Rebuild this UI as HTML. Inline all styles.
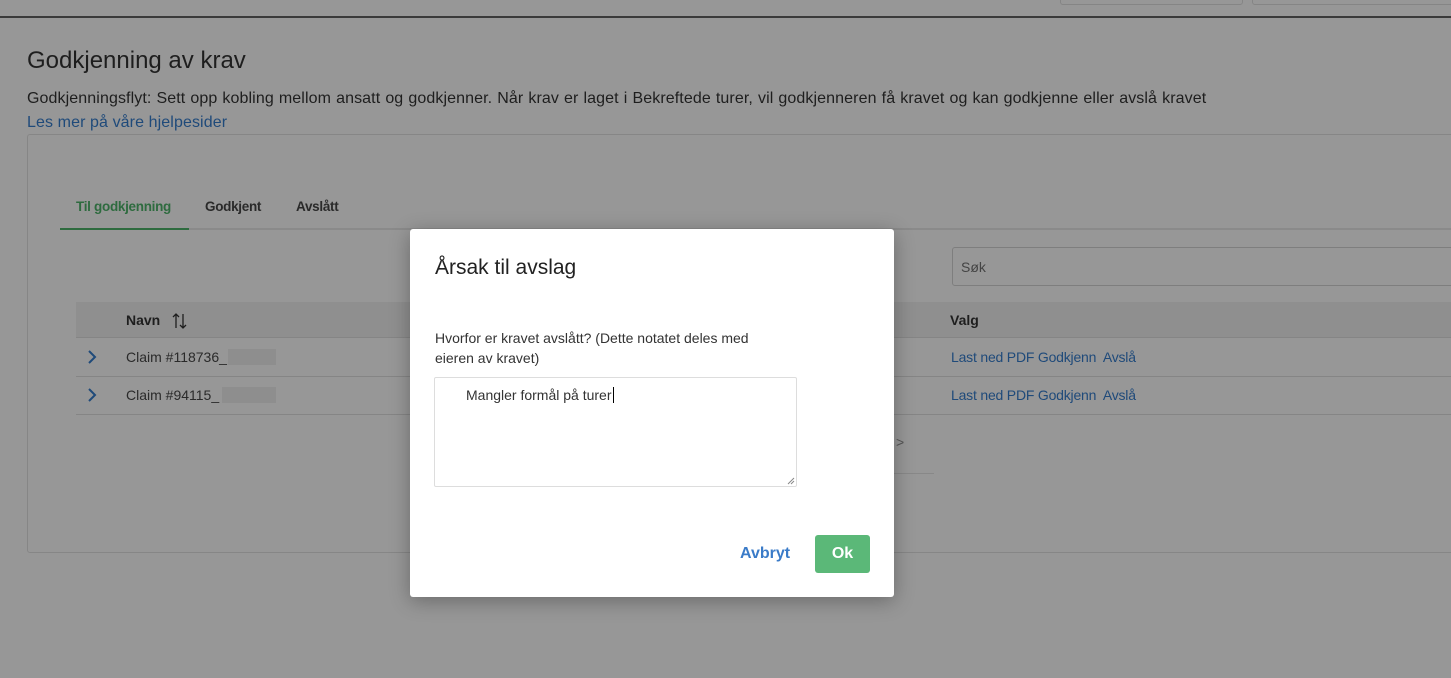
<!DOCTYPE html>
<html><head><meta charset="utf-8"><style>
*{box-sizing:border-box}
body{margin:0;width:1451px;height:678px;overflow:hidden;background:#979797;font-family:"Liberation Sans",sans-serif;position:relative;color:#222}
.a{position:absolute}
.link{color:#1f4a7a}
</style></head><body>
<div class="a" style="left:0;top:16px;width:1451px;height:2px;background:#3a3a3a"></div>
<div class="a" style="left:1060px;top:-4px;width:183px;height:9px;border:1px solid #858585;border-radius:3px"></div>
<div class="a" style="left:1252px;top:-4px;width:210px;height:9px;border:1px solid #858585;border-radius:3px"></div>
<div class="a" style="left:27px;top:47px;font-size:24px;color:#1e1e1e">Godkjenning av krav</div>
<div class="a" style="left:27px;top:90px;font-size:16px;color:#1e1e1e;letter-spacing:0.1px;word-spacing:0.5px">Godkjenningsflyt: Sett opp kobling mellom ansatt og godkjenner. Når krav er laget i Bekreftede turer, vil godkjenneren få kravet og kan godkjenne eller avslå kravet</div>
<div class="a link" style="left:27px;top:114px;font-size:16px;letter-spacing:0.1px">Les mer på våre hjelpesider</div>
<div class="a" style="left:27px;top:134px;width:1440px;height:419px;border:1px solid #868686;border-radius:3px"></div>
<div class="a" style="left:76px;top:199px;font-size:13.5px;color:#2e6b3f;font-weight:bold;letter-spacing:-0.3px">Til godkjenning</div>
<div class="a" style="left:205px;top:199px;font-size:13.5px;color:#2a2a2a;font-weight:bold;letter-spacing:-0.3px">Godkjent</div>
<div class="a" style="left:296px;top:199px;font-size:13.5px;color:#2a2a2a;font-weight:bold;letter-spacing:-0.3px">Avslått</div>
<div class="a" style="left:60px;top:228px;width:1400px;height:2px;background:#8a8a8a"></div>
<div class="a" style="left:60px;top:228px;width:129px;height:2px;background:#2e6b3f"></div>
<div class="a" style="left:952px;top:247px;width:520px;height:39px;border:1px solid #7e7e7e;border-radius:3px"></div>
<div class="a" style="left:961px;top:259px;font-size:14px;color:#444">Søk</div>
<div class="a" style="left:76px;top:302px;width:1390px;height:36px;background:#8f8f8f;border-bottom:1px solid #858585"></div>
<div class="a" style="left:126px;top:312px;font-size:14px;font-weight:bold;color:#1e1e1e">Navn</div>
<svg class="a" style="left:171px;top:312px" width="18" height="18" viewBox="0 0 18 18" fill="none" stroke="#1e1e1e" stroke-width="1.3"><path d="M5 16V2M2 5l3-3 3 3M12 2v14M9 13l3 3 3-3"/></svg>
<div class="a" style="left:950px;top:312px;font-size:14px;font-weight:bold;color:#1e1e1e">Valg</div>
<div class="a" style="left:76px;top:376px;width:1390px;height:1px;background:#858585"></div>
<div class="a" style="left:76px;top:414px;width:1390px;height:1px;background:#858585"></div>
<svg class="a" style="left:86px;top:349px" width="12" height="16" viewBox="0 0 12 16" fill="none" stroke="#1f4a7a" stroke-width="2"><path d="M3 2l6 6-6 6"/></svg>
<svg class="a" style="left:86px;top:387px" width="12" height="16" viewBox="0 0 12 16" fill="none" stroke="#1f4a7a" stroke-width="2"><path d="M3 2l6 6-6 6"/></svg>
<div class="a" style="left:126px;top:349px;font-size:14px;color:#2a2a2a">Claim #118736_</div>
<div class="a" style="left:228px;top:349px;width:48px;height:16px;background:#8e8e8e"></div>
<div class="a" style="left:126px;top:387px;font-size:14px;color:#2a2a2a">Claim #94115_</div>
<div class="a" style="left:222px;top:387px;width:54px;height:16px;background:#8e8e8e"></div>
<div class="a link" style="left:951px;top:349px;font-size:14px;letter-spacing:-0.2px">Last ned PDF&nbsp;Godkjenn&nbsp; Avslå</div>
<div class="a link" style="left:951px;top:387px;font-size:14px;letter-spacing:-0.2px">Last ned PDF&nbsp;Godkjenn&nbsp; Avslå</div>
<div class="a" style="left:896px;top:434px;font-size:14px;color:#555">&gt;</div>
<div class="a" style="left:894px;top:473px;width:40px;height:1px;background:#888"></div>
<div class="a" style="left:410px;top:229px;width:484px;height:368px;background:#fff;border-radius:3px;box-shadow:0 4px 20px rgba(0,0,0,.3)">
 <div class="a" style="left:25px;top:27px;font-size:21px;color:#222">Årsak til avslag</div>
 <div class="a" style="left:25px;top:99px;width:345px;font-size:14px;line-height:20px;color:#333">Hvorfor er kravet avslått? (Dette notatet deles med eieren av kravet)</div>
 <div class="a" style="left:24px;top:148px;width:363px;height:110px;border:1px solid #ddd;border-radius:2px">
  <div class="a" style="left:31px;top:9px;font-size:14px;color:#333">Mangler formål på turer<span style="border-left:1px solid #000;margin-left:1px"></span></div>
  <svg class="a" style="right:1px;bottom:1px" width="8" height="8" viewBox="0 0 8 8" stroke="#888"><path d="M1 7L7 1M4 7L7 4"/></svg>
 </div>
 <div class="a" style="left:330px;top:316px;font-size:16px;color:#3a7bc8;font-weight:bold">Avbryt</div>
 <div class="a" style="left:405px;top:306px;width:55px;height:38px;background:#5bb878;border-radius:3px;color:#fff;font-size:16px;font-weight:bold;text-align:center;line-height:38px">Ok</div>
</div>
</body></html>
